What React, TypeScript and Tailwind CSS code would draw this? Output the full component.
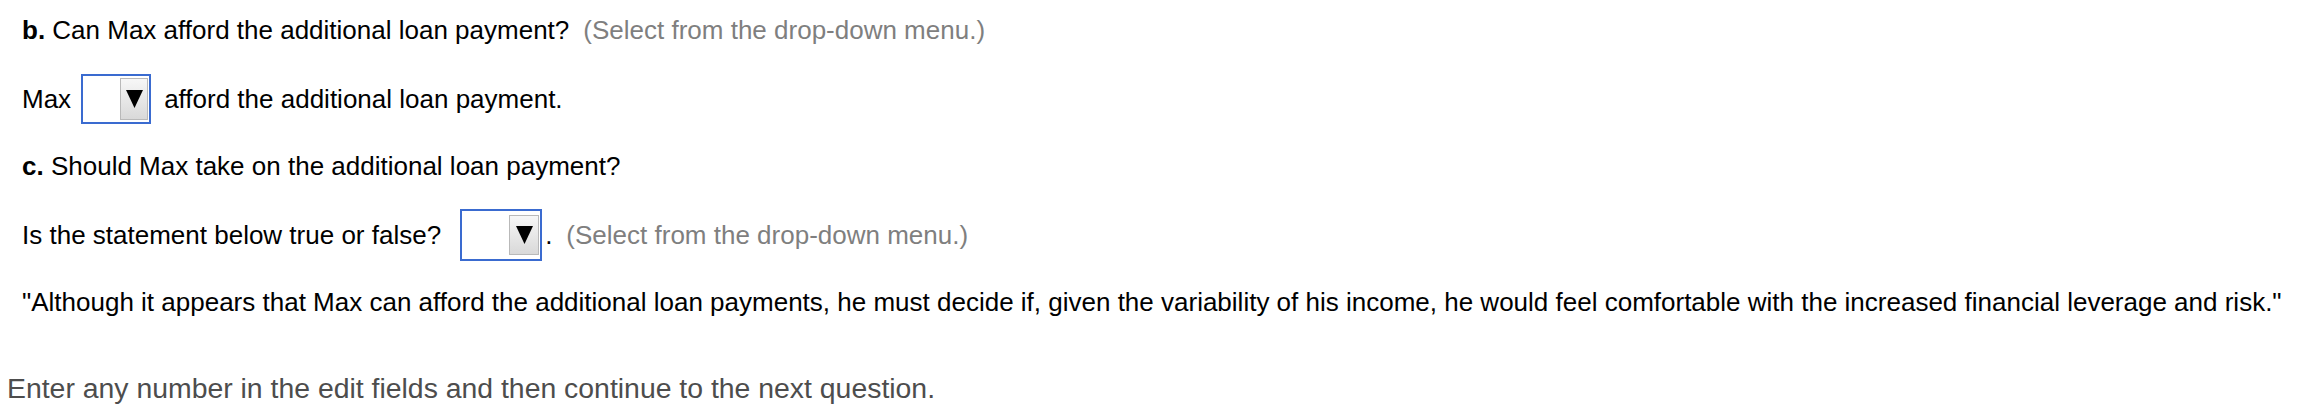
import React from "react";

function Dropdown({ w, h, btnW, btnH }: { w: string; h: string; btnW: string; btnH: string }) {
  return (
    <div className={`inline-flex shrink-0 items-center justify-end border-2 border-[#3a6bd0] bg-white pr-[1px] ${w} ${h}`}>
      <div
        className={`flex items-center justify-center border border-[#b9b9b9] bg-gradient-to-b from-[#f7f7f7] to-[#d9d9d9] ${btnW} ${btnH}`}
      >
        <svg width="17" height="18" viewBox="0 0 17 18">
          <polygon points="0,0 17,0 8.5,18" fill="#000" />
        </svg>
      </div>
    </div>
  );
}

export default function App() {
  return (
    <div className="h-[414px] w-[2306px] bg-white font-['Liberation_Sans',Arial,sans-serif] text-black">
      <div className="pl-[22px] pt-[15px] text-[26px] leading-[30px]">
        <p>
          <b>b.</b> Can Max afford the additional loan payment?
          <span className="ml-[14px] text-[#7f7f7f]">(Select from the drop-down menu.)</span>
        </p>

        <div className="mt-[29px] flex items-center">
          <span>Max</span>
          <div className="ml-[10px] mr-[13px] flex">
            <Dropdown w="w-[70px]" h="h-[50px]" btnW="w-[28px]" btnH="h-[42px]" />
          </div>
          <span>afford the additional loan payment.</span>
        </div>

        <p className="mt-[27px]">
          <b>c.</b> Should Max take on the additional loan payment?
        </p>

        <div className="mt-[28px] flex items-center">
          <span>Is the statement below true or false?</span>
          <div className="ml-[19px] flex">
            <Dropdown w="w-[82px]" h="h-[52px]" btnW="w-[30px]" btnH="h-[40px]" />
          </div>
          <span className="ml-[3px]">.</span>
          <span className="ml-[14px] text-[#7f7f7f]">(Select from the drop-down menu.)</span>
        </div>

        <p className="mt-[26px]">
          "Although it appears that Max can afford the additional loan payments, he must decide if, given the
          variability of his income, he would feel comfortable with the increased financial leverage and risk."
        </p>
      </div>

      <p className="mt-[55px] pl-[7px] text-[28.4px] leading-[32px] text-[#4d4d4d]">
        Enter any number in the edit fields and then continue to the next question.
      </p>
    </div>
  );
}
